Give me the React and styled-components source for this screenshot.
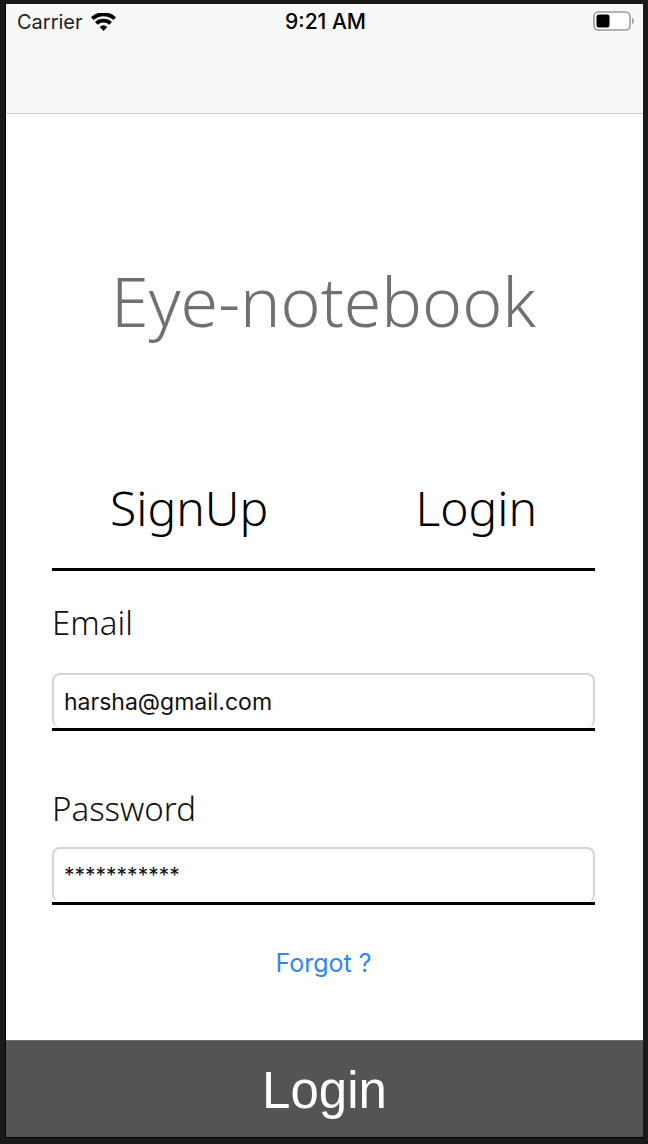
import React, { useState } from "react";
import styled, { createGlobalStyle } from "styled-components";

const GlobalStyle = createGlobalStyle`
  *, *::before, *::after { box-sizing: border-box; }
  body { margin: 0; background: #1a1a19; }
  button, input { font: inherit; color: inherit; }
`;

const system = `Inter, "Liberation Sans", sans-serif`;
const humanist = `"Noto Sans", "Open Sans", sans-serif`;

const Frame = styled.div`
  min-height: 100vh;
  display: flex;
  padding: 4px 5px 6px 5px;
  background: #1a1a19;
  font-family: ${system};
`;

const Screen = styled.div`
  flex: 1;
  min-width: 0;
  display: flex;
  flex-direction: column;
  border-left: 1px solid #000;
  border-bottom: 1px solid #000;
  background: #fff;
  color: #000;
`;

const Header = styled.header`
  height: 110px;
  padding: 5px 9px 0 11px;
  background: #f8f8f8;
  border-bottom: 1px solid #cbcbcb;
`;

const StatusBar = styled.div`
  display: grid;
  grid-template-columns: 1fr auto 1fr;
  align-items: center;
  font-size: 20px;
  line-height: 24px;
`;

const Carrier = styled.div`
  display: flex;
  align-items: center;
  gap: 8px;
  color: #222;
`;

const Clock = styled.time`
  font-size: 21px;
  line-height: 26px;
  font-weight: 550;
`;

const BatterySlot = styled.div`
  display: flex;
  justify-content: flex-end;
  padding-bottom: 2px;
`;

const Form = styled.form`
  flex: 1;
  display: flex;
  flex-direction: column;
`;

const Content = styled.main`
  flex: 1;
  padding: 0 48px 0 46px;
  display: flex;
  flex-direction: column;
`;

const Title = styled.h1`
  margin: 147px 0 0;
  font: 340 68px/80px ${humanist};
  color: #707070;
  text-align: center;
  white-space: nowrap;
`;

const Tabs = styled.nav`
  margin-top: 135px;
  padding: 0 58px 28px;
  display: flex;
  justify-content: space-between;
  border-bottom: 3px solid #000;
`;

const Tab = styled.button`
  padding: 0;
  border: 0;
  background: none;
  font: 330 48px/64px ${humanist};
  cursor: pointer;
`;

const Field = styled.div`
  display: flex;
  flex-direction: column;
  gap: ${(p) => p.$gap}px;
  margin-top: ${(p) => p.$top}px;
`;

const Label = styled.label`
  font: 330 33px/40px ${humanist};
  color: #111;
`;

const Underline = styled.div`
  display: flex;
  border-bottom: 3px solid #000;
`;

const TextBox = styled.input`
  flex: 1;
  min-width: 0;
  height: 55px;
  padding: 0 10px;
  border: 2px solid #d4d4d4;
  border-bottom-width: 0;
  border-radius: 8px;
  background: #fff;
  font-size: ${(p) => (p.$masked ? 21 : 23)}px;
  color: #111;
  outline: none;
`;

const Forgot = styled.a`
  align-self: center;
  margin: 42px 0 24px;
  font-size: 25px;
  line-height: 32px;
  color: #2f86f6;
  text-decoration: none;
`;

const Submit = styled.button`
  height: 97px;
  padding: 4px 0 0;
  border: 0;
  border-top: 1px solid #747474;
  background: #545454;
  color: #fff;
  font: 400 51px/60px "Liberation Sans", Arial, sans-serif;
  cursor: pointer;
`;

function WifiIcon() {
  return (
    <svg width="25" height="19" viewBox="0 0 25 19" aria-hidden="true">
      <g fill="none" stroke="#000" strokeWidth="3.9">
        <path d="M1.3 5.6A16.6 16.6 0 0 1 23.7 5.6" />
        <path d="M5.4 10.4A10.4 10.4 0 0 1 19.6 10.4" />
      </g>
      <path d="M8.7 13.9a5.8 5.8 0 0 1 7.6 0L12.5 17.9z" fill="#000" />
    </svg>
  );
}

function BatteryIcon() {
  return (
    <svg width="41" height="20" viewBox="0 0 41 20" aria-hidden="true">
      <rect x="1" y="1" width="36" height="18" rx="4.5" fill="#fff" stroke="#999" strokeWidth="1.6" />
      <rect x="3.5" y="3.5" width="13" height="13" rx="2.2" fill="#000" />
      <path d="M39 6.8q1.8 1 1.8 3.2t-1.8 3.2z" fill="#999" />
    </svg>
  );
}

export default function App() {
  const [email, setEmail] = useState("harsha@gmail.com");
  const [password, setPassword] = useState("***********");

  return (
    <Frame>
      <GlobalStyle />
      <Screen>
        <Header>
          <StatusBar>
            <Carrier>
              Carrier
              <WifiIcon />
            </Carrier>
            <Clock>9:21 AM</Clock>
            <BatterySlot>
              <BatteryIcon />
            </BatterySlot>
          </StatusBar>
        </Header>
        <Form onSubmit={(e) => e.preventDefault()}>
          <Content>
            <Title>Eye-notebook</Title>
            <Tabs>
              <Tab type="button">SignUp</Tab>
              <Tab type="button">Login</Tab>
            </Tabs>
            <Field $top={32} $gap={30}>
              <Label htmlFor="email">Email</Label>
              <Underline>
                <TextBox id="email" value={email} onChange={(e) => setEmail(e.target.value)} />
              </Underline>
            </Field>
            <Field $top={58} $gap={18}>
              <Label htmlFor="password">Password</Label>
              <Underline>
                <TextBox
                  id="password"
                  $masked
                  value={password}
                  onChange={(e) => setPassword(e.target.value)}
                />
              </Underline>
            </Field>
            <Forgot href="#forgot">Forgot ?</Forgot>
          </Content>
          <Submit type="submit">Login</Submit>
        </Form>
      </Screen>
    </Frame>
  );
}
